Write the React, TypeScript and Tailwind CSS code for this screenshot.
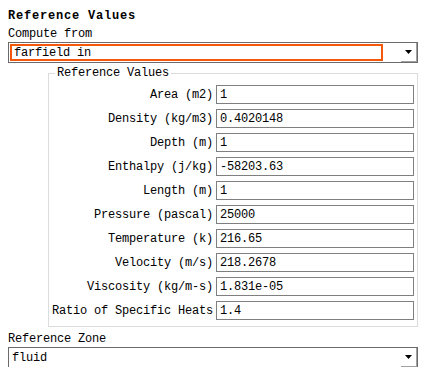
const rows: [string, string][] = [
  ["Area (m2)", "1"],
  ["Density (kg/m3)", "0.4020148"],
  ["Depth (m)", "1"],
  ["Enthalpy (j/kg)", "-58203.63"],
  ["Length (m)", "1"],
  ["Pressure (pascal)", "25000"],
  ["Temperature (k)", "216.65"],
  ["Velocity (m/s)", "218.2678"],
  ["Viscosity (kg/m-s)", "1.831e-05"],
  ["Ratio of Specific Heats", "1.4"],
];

function Arrow() {
  return (
    <div className="flex w-[16px] items-center justify-center border-r border-b border-[#a0a0a0] bg-white">
      <svg width="7" height="4" viewBox="0 0 7 4">
        <path d="M0 0 H7 L3.5 4 Z" fill="#000" />
      </svg>
    </div>
  );
}

function Dropdown({ value, focused }: { value: string; focused?: boolean }) {
  return (
    <div className="flex h-[21px] w-[410px] border border-[#6b6b6b] bg-white">
      <div className="flex flex-1 p-px">
        {focused ? (
          <div className="flex h-full w-[373px] items-center border-2 border-[#f5580a] pl-[2px]">
            {value}
          </div>
        ) : (
          <div className="flex h-full items-center pl-[2px]">{value}</div>
        )}
      </div>
      <Arrow />
    </div>
  );
}

export default function App() {
  return (
    <div
      className="h-[367px] w-[427px] bg-white px-2 pt-[9px] text-[12px] leading-[14px] tracking-[-0.2px] text-black"
      style={{ fontFamily: '"Liberation Mono", monospace' }}
    >
      <div className="font-bold tracking-[0.8px]">Reference Values</div>
      <div className="mt-[4px]">Compute from</div>
      <div className="mt-px">
        <Dropdown value="farfield in" focused />
      </div>

      <fieldset className="mt-[3px] ml-[40px] w-[370px] border border-[#dcdcdc] pr-[3px] pb-[6px] pl-[2px]">
        <legend className="ml-[4px] px-[2px]">Reference Values</legend>
        <div className="mt-[5px] flex flex-col gap-[5px]">
          {rows.map(([label, value]) => (
            <div key={label} className="flex items-center gap-[3px]">
              <div className="flex-1 text-right whitespace-nowrap">{label}</div>
              <div className="flex h-[19px] w-[198px] items-center border border-[#7f7f7f] pl-[3px]">
                {value}
              </div>
            </div>
          ))}
        </div>
      </fieldset>

      <div className="mt-[5px]">Reference Zone</div>
      <div className="mt-px">
        <Dropdown value="fluid" />
      </div>
    </div>
  );
}
